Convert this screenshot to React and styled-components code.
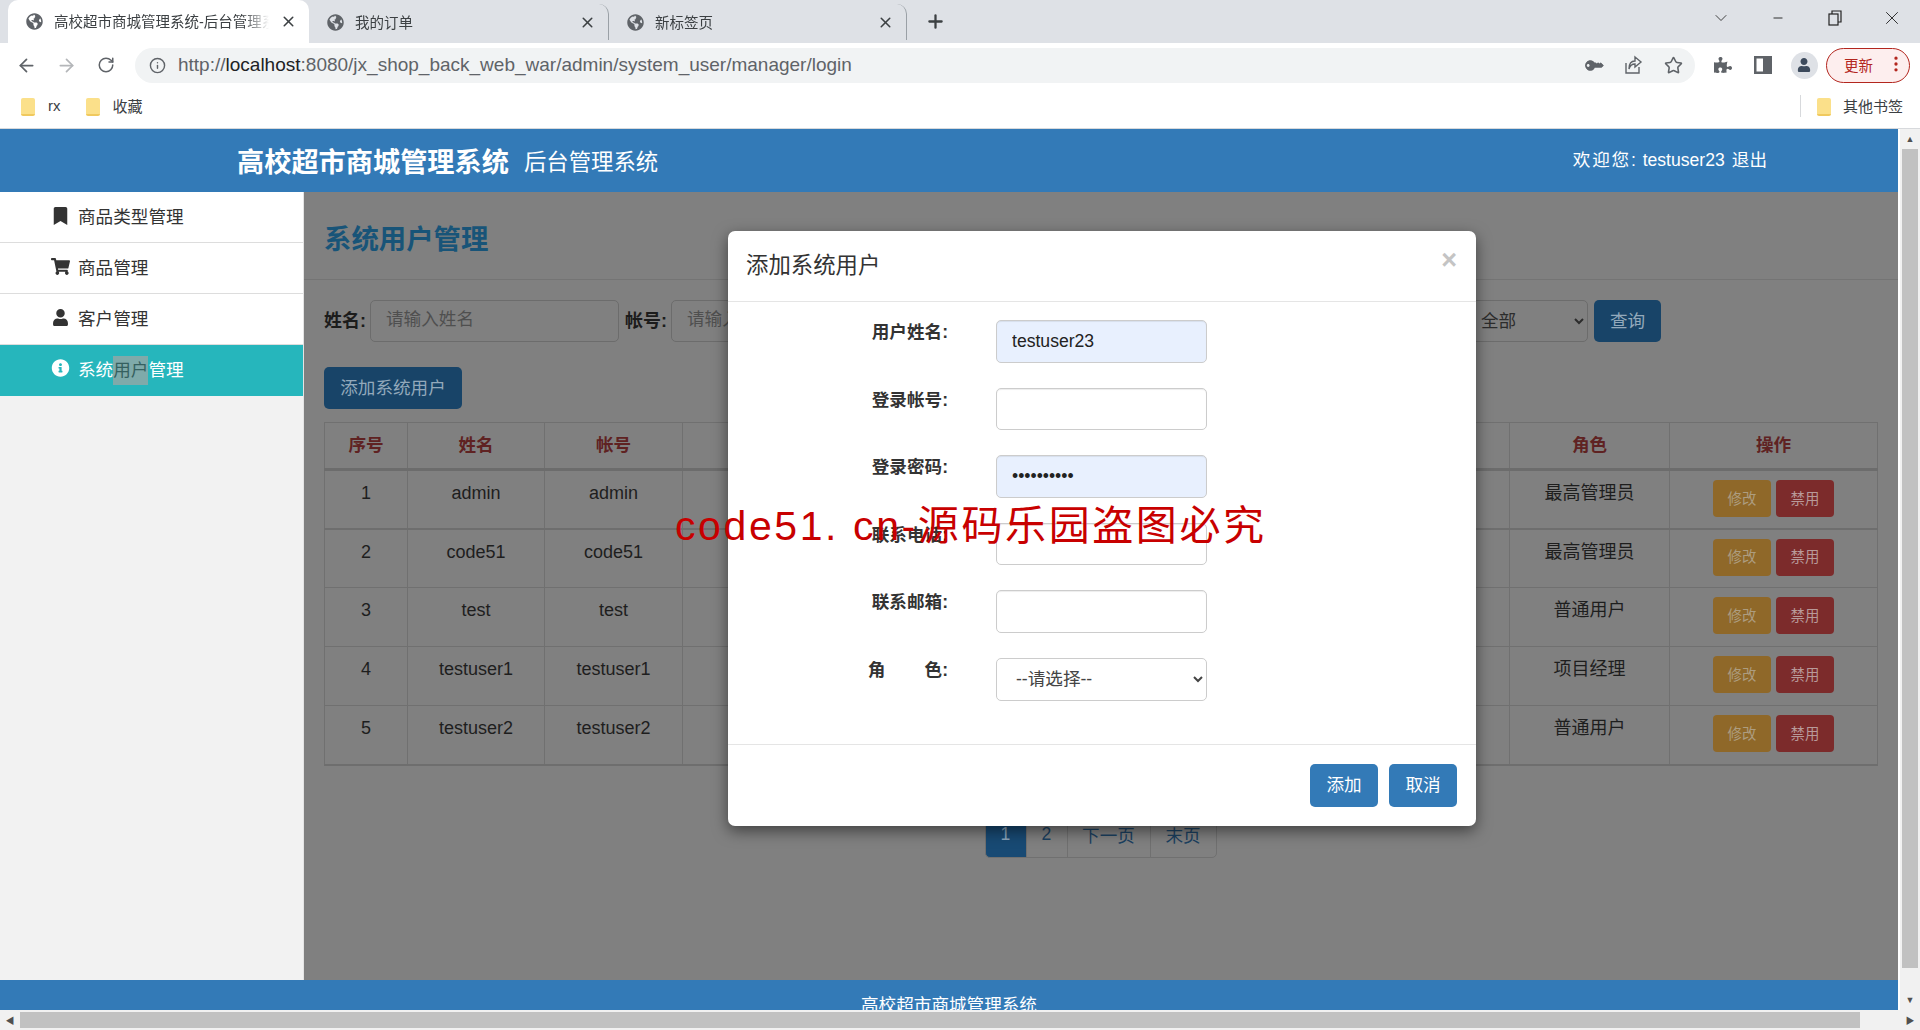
import styled, { createGlobalStyle } from "styled-components";
import { ArrowLeft, ArrowRight, RotateCw, Info, Star, X, Plus, Minus, ChevronDown, EllipsisVertical } from "lucide-react";
import { FaBookmark, FaShoppingCart, FaUser, FaInfoCircle, FaGlobeAmericas, FaPuzzlePiece, FaKey } from "react-icons/fa";

const FONT = `"Liberation Sans", "Noto Sans CJK SC", sans-serif`;

const GlobalStyle = createGlobalStyle`
  html, body {
    margin: 0;
    padding: 0;
    width: 1920px;
    height: 1030px;
    overflow: hidden;
    font-family: ${FONT};
    color: #333;
  }
  * { box-sizing: border-box; }
`;

const Viewport = styled.div`
  width: 1920px;
  height: 1030px;
  display: flex;
  flex-direction: column;
  position: relative;
  overflow: hidden;
  background: #fff;
`;

/* browser chrome */
const TabStrip = styled.div`
  height: 43px;
  flex: none;
  display: flex;
  align-items: flex-end;
  padding-left: 8px;
  background: #dee1e6;
`;

const Tab = styled.div`
  width: ${(p) => p.$width}px;
  height: ${(p) => (p.$active ? 43 : 36)}px;
  margin-bottom: ${(p) => (p.$active ? 0 : 3)}px;
  padding: 0 12px 0 18px;
  display: flex;
  align-items: center;
  gap: 11px;
  background: ${(p) => (p.$active ? "#fff" : "transparent")};
  border-radius: 10px 10px 0 0;
  border-right: ${(p) => (p.$divider ? "1px solid #9aa0a6" : "none")};
  color: #3c4043;
  font-size: 14.5px;
  svg.fav { color: #5f6368; flex: none; }
`;

const TabTitle = styled.span`
  flex: 1;
  padding-bottom: 2px;
  white-space: nowrap;
  overflow: hidden;
  mask-image: linear-gradient(to right, #000 88%, transparent 100%);
`;

const NewTab = styled.div`
  width: 56px;
  display: flex;
  justify-content: center;
  align-self: center;
  color: #3c4043;
`;

const WindowControls = styled.div`
  margin-left: auto;
  align-self: flex-start;
  display: flex;
  height: 36px;
`;

const WindowButton = styled.div`
  width: 57px;
  display: flex;
  align-items: center;
  justify-content: center;
  color: #222;
`;

const Toolbar = styled.div`
  height: 44px;
  flex: none;
  display: flex;
  align-items: center;
  padding-left: 6px;
  background: #fff;
`;

const NavButton = styled.div`
  width: 40px;
  height: 36px;
  flex: none;
  display: flex;
  align-items: center;
  justify-content: center;
  color: ${(p) => (p.$off ? "#b4b6b9" : "#5f6368")};
`;

const ExtensionGroup = styled.div`
  display: flex;
  margin-left: 8px;
`;

const AddressBar = styled.div`
  width: 1560px;
  height: 35px;
  margin-left: 9px;
  flex: none;
  display: flex;
  align-items: center;
  padding: 0 2px 0 14px;
  border-radius: 18px;
  background: #f1f3f4;
  color: #5f6368;
`;

const AddressText = styled.div`
  flex: 1;
  margin-left: 12px;
  font-size: 19px;
  white-space: nowrap;
  color: #5f6368;
  b { font-weight: 400; color: #202124; }
`;

const AddressIcon = styled.div`
  width: 40px;
  display: flex;
  justify-content: center;
  color: #5f6368;
`;

const KeyGlyph = styled(FaKey)`
  transform: rotate(-135deg);
`;

const Avatar = styled.div`
  width: 27px;
  height: 27px;
  margin-left: 2px;
  border-radius: 50%;
  background: #dee1e6;
  display: flex;
  align-items: center;
  justify-content: center;
  color: #3c4a5c;
`;

const UpdatePill = styled.div`
  width: 84px;
  height: 35px;
  margin-left: 3px;
  display: flex;
  align-items: center;
  justify-content: space-between;
  padding: 0 3px 2px 17px;
  border: 1px solid #b3261e;
  border-radius: 18px;
  background: #fdeeee;
  color: #b3261e;
  font-size: 14.5px;
`;

const BookmarkBar = styled.div`
  height: 42px;
  flex: none;
  display: flex;
  align-items: center;
  padding: 0 17px 4px 21px;
  border-bottom: 1px solid #d7d9dc;
  background: #fff;
  font-size: 15px;
  color: #3c4043;
`;

const Bookmark = styled.div`
  display: flex;
  align-items: center;
  gap: 13px;
  margin-right: ${(p) => p.$gap || 0}px;
`;

const Folder = styled.span`
  display: block;
  width: 14px;
  height: 18px;
  margin-top: 3px;
  border-radius: 2px;
  background: #fbe08a;
  border-bottom: 2px solid #f0c95e;
`;

const OtherBookmarks = styled.div`
  margin-left: auto;
  height: 22px;
  padding-left: 16px;
  border-left: 1px solid #d7d9dc;
  display: flex;
  align-items: center;
  gap: 12px;
`;

/* page */
const PageFrame = styled.div`
  height: 881px;
  flex: none;
  display: flex;
`;

const PageBody = styled.div`
  width: 1900px;
  padding-right: 2px;
  display: flex;
  flex-direction: column;
  overflow: hidden;
  background: #fff;
`;

const Banner = styled.header`
  height: 63px;
  flex: none;
  display: flex;
  align-items: center;
  padding: 0 131px 2px 237px;
  background: #337ab7;
  color: #fff;
`;

const BannerTitle = styled.h1`
  margin: 0;
  font-size: 27.2px;
  font-weight: 700;
`;

const BannerSub = styled.span`
  margin-left: 15px;
  font-size: 22.4px;
`;

const BannerUser = styled.div`
  margin-left: auto;
  margin-bottom: 3px;
  font-size: 17.6px;
  white-space: nowrap;
  span { margin-right: 5px; letter-spacing: 1.8px; }
  a { margin-left: 7px; }
`;

const Middle = styled.div`
  height: 788px;
  flex: none;
  display: flex;
`;

const Sidebar = styled.nav`
  width: 304px;
  flex: none;
  background: #f2f2f2;
  border-right: 1px solid #e4e4e4;
`;

const SideItem = styled.div`
  height: 51px;
  display: flex;
  align-items: center;
  gap: 8px;
  padding: 0 0 ${(p) => (p.$active ? 5 : 3)}px 51px;
  background: ${(p) => (p.$active ? "#26b6bc" : "#fff")};
  border-bottom: ${(p) => (p.$active ? "none" : "1px solid #ddd")};
  color: ${(p) => (p.$active ? "#fff" : "#333")};
  font-size: 17.6px;
  svg { width: 19px; flex: none; }
  mark { background: #7faaaa; color: #35605f; padding: 4px 0 5px; }
`;

const Main = styled.main`
  flex: 1;
  position: relative;
  overflow: hidden;
  background: #808080;
`;

const MainHead = styled.div`
  height: 88px;
  padding: 2px 20px 0;
  display: flex;
  align-items: center;
  border-bottom: 1px solid #747474;
`;

const MainTitle = styled.h2`
  margin: 0;
  font-size: 27.4px;
  font-weight: 700;
  color: #185478;
`;

const SearchRow = styled.div`
  width: 1357px;
  height: 42px;
  margin-top: 20px;
  padding-left: 20px;
  display: flex;
  align-items: center;
`;

const SearchLabel = styled.label`
  padding-bottom: 4px;
  font-size: 18px;
  font-weight: 700;
  color: #1c1c1c;
  margin: 0 4px 0 ${(p) => p.$gap || 0}px;
  white-space: nowrap;
`;

const SearchInput = styled.input`
  width: ${(p) => (p.$width ? `${p.$width}px` : "auto")};
  flex: ${(p) => (p.$width ? "none" : 1)};
  min-width: 0;
  height: 42px;
  padding: 0 15px 3px;
  border: 1px solid #6c6c6c;
  border-radius: 5px;
  background: #808080;
  font: 17.6px ${FONT};
  outline: none;
  &::placeholder { color: #4f4f4f; opacity: 1; }
`;

const SearchSelect = styled.select`
  width: 121px;
  height: 42px;
  margin-right: 6px;
  padding-left: 9px;
  border: 1px solid #6c6c6c;
  border-radius: 5px;
  background: #808080;
  color: #2c2c2c;
  font: 17.6px ${FONT};
`;

const DimButton = styled.button`
  width: ${(p) => p.$width}px;
  height: 42px;
  flex: none;
  padding: 0 0 4px;
  border: none;
  border-radius: 5px;
  background: #184468;
  color: #93a9bb;
  font: 17.6px ${FONT};
`;

const AddRow = styled.div`
  margin-top: 25px;
  padding-left: 20px;
`;

const GridTable = styled.table`
  width: 1554px;
  margin: 13px 0 0 20px;
  table-layout: fixed;
  border-collapse: collapse;
  font-size: 18px;
  color: #1e1e1e;
  text-align: center;
  th {
    height: 47px;
    padding-bottom: 5px;
    border: 1px solid #707070;
    border-bottom: 3px solid #6c6c6c;
    color: #5f2222;
    font-size: 17.6px;
    font-weight: 700;
  }
  td {
    height: 59px;
    padding: 9px 8px 7px;
    border: 1px solid #707070;
    vertical-align: top;
    line-height: 26px;
  }
  tbody tr:first-child td { border-bottom: 2px solid #6e6e6e; }
  tbody tr:last-child td { border-bottom: 2px solid #6e6e6e; }
`;

const ActionCell = styled.div`
  display: flex;
  justify-content: center;
  gap: 5px;
`;

const ActionButton = styled.button`
  width: 58px;
  height: 37px;
  padding: 0 0 3px;
  border: none;
  border-radius: 4px;
  background: ${(p) => (p.$danger ? "#7c2b2b" : "#8f6829")};
  color: ${(p) => (p.$danger ? "#b89a9a" : "#ad9d80")};
  font: 14.4px ${FONT};
`;

const Pager = styled.div`
  display: flex;
  justify-content: center;
  margin-top: 50px;
`;

const PageItem = styled.div`
  width: ${(p) => p.$width}px;
  height: 42px;
  display: flex;
  align-items: center;
  justify-content: center;
  margin-left: -1px;
  padding-bottom: 4px;
  border: 1px solid #707070;
  background: ${(p) => (p.$active ? "#184a74" : "#808080")};
  color: ${(p) => (p.$active ? "#8aa5bb" : "#1b4060")};
  font-size: 17.6px;
  &:first-child { border-radius: 5px 0 0 5px; }
  &:last-child { border-radius: 0 5px 5px 0; }
`;

/* dialog */
const Dialog = styled.div`
  position: absolute;
  top: 39px;
  left: 424px;
  width: 748px;
  height: 595px;
  display: flex;
  flex-direction: column;
  background: #fff;
  border-radius: 7px;
  box-shadow: 0 5px 15px rgba(0, 0, 0, 0.5);
`;

const DialogHead = styled.div`
  height: 71px;
  flex: none;
  display: flex;
  align-items: center;
  justify-content: space-between;
  padding: 0 18px;
  border-bottom: 1px solid #e5e5e5;
`;

const DialogTitle = styled.h4`
  margin: 0 0 6px;
  font-size: 22.4px;
  font-weight: 400;
  color: #333;
`;

const CloseMark = styled.span`
  margin: 0 1px 12px 0;
  font-size: 27px;
  font-weight: 700;
  line-height: 1;
  color: #c4c4c4;
`;

const DialogBody = styled.div`
  flex: 1;
  padding: 18px 0 0 144px;
  display: grid;
  grid-template-columns: 76px 211px;
  grid-auto-rows: 42.6px;
  column-gap: 48px;
  row-gap: 25px;
  align-content: start;
`;

const FieldLabel = styled.label`
  justify-self: end;
  margin-top: 1px;
  font-size: 17.6px;
  font-weight: 700;
  line-height: 22px;
  color: #333;
  white-space: pre;
`;

const FieldInput = styled.input`
  width: 100%;
  height: 100%;
  padding: 0 15px;
  border: 1px solid #ccc;
  border-radius: 5px;
  background: ${(p) => (p.$filled ? "#e8f0fe" : "#fff")};
  color: #222;
  font: 17.6px ${FONT};
  outline: none;
  box-shadow: inset 0 1px 1px rgba(0, 0, 0, 0.075);
`;

const FieldSelect = styled.select`
  width: 100%;
  height: 100%;
  padding-left: 15px;
  border: 1px solid #ccc;
  border-radius: 5px;
  background: #fff;
  color: #444;
  font: 17.6px ${FONT};
`;

const DialogFoot = styled.div`
  height: 82px;
  flex: none;
  display: flex;
  justify-content: flex-end;
  gap: 11px;
  padding: 19px 19px 0 0;
  border-top: 1px solid #e5e5e5;
`;

const PrimaryButton = styled.button`
  width: 68px;
  height: 43px;
  padding: 0 0 5px;
  border: none;
  border-radius: 5px;
  background: #337ab7;
  color: #fff;
  font: 17.6px ${FONT};
`;

const Footer = styled.footer`
  height: 30px;
  flex: none;
  padding-top: 13px;
  background: #337ab7;
  color: #fff;
  font-size: 17.6px;
  line-height: 24px;
  text-align: center;
  overflow: hidden;
  white-space: nowrap;
`;

const Watermark = styled.div`
  position: absolute;
  top: 498px;
  left: 675px;
  color: #c80000;
  font-size: 41px;
  letter-spacing: 2.6px;
  line-height: 56px;
  white-space: nowrap;
  pointer-events: none;
`;

/* window scrollbars */
const VScroll = styled.div`
  width: 20px;
  flex: none;
  display: flex;
  flex-direction: column;
  align-items: center;
  background: #f1f1f1;
`;

const ScrollArrow = styled.div`
  height: 20px;
  flex: none;
  display: flex;
  align-items: center;
  justify-content: center;
  width: 20px;
  color: #505050;
  font-size: 9px;
`;

const VThumb = styled.div`
  width: 16px;
  height: 819px;
  background: #c1c1c1;
`;

const VSpacer = styled.div`
  flex: 1;
`;

const HScroll = styled.div`
  height: 20px;
  flex: none;
  display: flex;
  align-items: center;
  background: #f1f1f1;
`;

const HThumb = styled.div`
  width: 1840px;
  height: 16px;
  background: #c1c1c1;
`;

const RestoreIcon = () => (
  <svg width="14" height="16" viewBox="0 0 14 16" fill="none" stroke="currentColor" strokeWidth="1.2">
    <rect x="1" y="4" width="9" height="11" />
    <path d="M4 4V1h9v11h-3" />
  </svg>
);

const ShareIcon = () => (
  <svg width="20" height="20" viewBox="0 0 20 20" fill="none" stroke="currentColor" strokeWidth="1.4">
    <path d="M3 8v10h13v-6" />
    <path d="M12 2l6 5-6 5V9c-3 0-5 1.500-6 5 0-5 2-8 6-8z" />
  </svg>
);

const SidePanelIcon = () => (
  <svg width="18" height="20" viewBox="0 0 18 20" fill="#5f6368">
    <path d="M0 1h18v18H0zM2.500 3.500v13H9v-13z" fillRule="evenodd" />
  </svg>
);

const users = [
  { name: "admin", role: "最高管理员" },
  { name: "code51", role: "最高管理员" },
  { name: "test", role: "普通用户" },
  { name: "testuser1", role: "项目经理" },
  { name: "testuser2", role: "普通用户" },
];

const Fav = () => <FaGlobeAmericas className="fav" size={17} />;

export default function App() {
  return (
    <Viewport>
      <GlobalStyle />
      <TabStrip>
        <Tab $width={301} $active>
          <Fav />
          <TabTitle>高校超市商城管理系统-后台管理系统</TabTitle>
          <X size={17} strokeWidth={2.2} />
        </Tab>
        <Tab $width={300} $divider>
          <Fav />
          <TabTitle>我的订单</TabTitle>
          <X size={17} strokeWidth={2.2} />
        </Tab>
        <Tab $width={298} $divider>
          <Fav />
          <TabTitle>新标签页</TabTitle>
          <X size={17} strokeWidth={2.2} />
        </Tab>
        <NewTab>
          <Plus size={21} strokeWidth={2.6} />
        </NewTab>
        <WindowControls>
          <WindowButton><ChevronDown size={20} strokeWidth={1} /></WindowButton>
          <WindowButton><Minus size={14} strokeWidth={1.6} /></WindowButton>
          <WindowButton><RestoreIcon /></WindowButton>
          <WindowButton><X size={22} strokeWidth={1} /></WindowButton>
        </WindowControls>
      </TabStrip>

      <Toolbar>
        <NavButton><ArrowLeft size={21} /></NavButton>
        <NavButton $off><ArrowRight size={21} /></NavButton>
        <NavButton><RotateCw size={18} /></NavButton>
        <AddressBar>
          <Info size={17} />
          <AddressText>http://<b>localhost</b>:8080/jx_shop_back_web_war/admin/system_user/manager/login</AddressText>
          <AddressIcon><KeyGlyph size={15} /></AddressIcon>
          <AddressIcon><ShareIcon /></AddressIcon>
          <AddressIcon><Star size={19} /></AddressIcon>
        </AddressBar>
        <ExtensionGroup>
          <NavButton><FaPuzzlePiece size={18} /></NavButton>
          <NavButton><SidePanelIcon /></NavButton>
          <NavButton><Avatar><FaUser size={14} /></Avatar></NavButton>
        </ExtensionGroup>
        <UpdatePill>
          更新
          <EllipsisVertical size={20} />
        </UpdatePill>
      </Toolbar>

      <BookmarkBar>
        <Bookmark $gap={25}><Folder />rx</Bookmark>
        <Bookmark><Folder />收藏</Bookmark>
        <OtherBookmarks><Folder />其他书签</OtherBookmarks>
      </BookmarkBar>

      <PageFrame>
        <PageBody>
          <Banner>
            <BannerTitle>高校超市商城管理系统</BannerTitle>
            <BannerSub>后台管理系统</BannerSub>
            <BannerUser><span>欢迎您:</span>testuser23<a>退出</a></BannerUser>
          </Banner>
          <Middle>
            <Sidebar>
              <SideItem><FaBookmark size={18} />商品类型管理</SideItem>
              <SideItem><FaShoppingCart size={17} />商品管理</SideItem>
              <SideItem><FaUser size={17} />客户管理</SideItem>
              <SideItem $active><FaInfoCircle size={18} /><span>系统<mark>用户</mark>管理</span></SideItem>
            </Sidebar>
            <Main>
              <MainHead>
                <MainTitle>系统用户管理</MainTitle>
              </MainHead>
              <SearchRow>
                <SearchLabel>姓名:</SearchLabel>
                <SearchInput $width={249} placeholder="请输入姓名" />
                <SearchLabel $gap={6}>帐号:</SearchLabel>
                <SearchInput $width={249} placeholder="请输入帐号" />
                <SearchLabel $gap={6}>电话:</SearchLabel>
                <SearchInput placeholder="请输入电话" />
                <SearchLabel $gap={6}>角色:</SearchLabel>
                <SearchSelect defaultValue="all">
                  <option value="all">全部</option>
                </SearchSelect>
                <DimButton $width={67}>查询</DimButton>
              </SearchRow>
              <AddRow>
                <DimButton $width={138}>添加系统用户</DimButton>
              </AddRow>
              <GridTable>
                <colgroup>
                  <col width="83" />
                  <col width="137" />
                  <col width="138" />
                  <col width="200" />
                  <col />
                  <col width="160" />
                  <col width="208" />
                </colgroup>
                <thead>
                  <tr>
                    <th>序号</th>
                    <th>姓名</th>
                    <th>帐号</th>
                    <th>联系电话</th>
                    <th>联系邮箱</th>
                    <th>角色</th>
                    <th>操作</th>
                  </tr>
                </thead>
                <tbody>
                  {users.map((user, index) => (
                    <tr key={user.name}>
                      <td>{index + 1}</td>
                      <td>{user.name}</td>
                      <td>{user.name}</td>
                      <td>13800000000</td>
                      <td>{user.name}@code51.cn</td>
                      <td>{user.role}</td>
                      <td>
                        <ActionCell>
                          <ActionButton>修改</ActionButton>
                          <ActionButton $danger>禁用</ActionButton>
                        </ActionCell>
                      </td>
                    </tr>
                  ))}
                </tbody>
              </GridTable>
              <Pager>
                <PageItem $width={42} $active>1</PageItem>
                <PageItem $width={42}>2</PageItem>
                <PageItem $width={84}>下一页</PageItem>
                <PageItem $width={67}>末页</PageItem>
              </Pager>

              <Dialog>
                <DialogHead>
                  <DialogTitle>添加系统用户</DialogTitle>
                  <CloseMark>×</CloseMark>
                </DialogHead>
                <DialogBody>
                  <FieldLabel>用户姓名:</FieldLabel>
                  <FieldInput $filled readOnly value="testuser23" />
                  <FieldLabel>登录帐号:</FieldLabel>
                  <FieldInput readOnly value="" />
                  <FieldLabel>登录密码:</FieldLabel>
                  <FieldInput $filled readOnly type="password" value="1234567890" />
                  <FieldLabel>联系电话:</FieldLabel>
                  <FieldInput readOnly value="" />
                  <FieldLabel>联系邮箱:</FieldLabel>
                  <FieldInput readOnly value="" />
                  <FieldLabel>角{"        "}色:</FieldLabel>
                  <FieldSelect defaultValue="">
                    <option value="">--请选择--</option>
                  </FieldSelect>
                </DialogBody>
                <DialogFoot>
                  <PrimaryButton>添加</PrimaryButton>
                  <PrimaryButton>取消</PrimaryButton>
                </DialogFoot>
              </Dialog>
            </Main>
          </Middle>
          <Footer>高校超市商城管理系统</Footer>
        </PageBody>
        <VScroll>
          <ScrollArrow>▲</ScrollArrow>
          <VThumb />
          <VSpacer />
          <ScrollArrow>▼</ScrollArrow>
        </VScroll>
      </PageFrame>

      <HScroll>
        <ScrollArrow>◀</ScrollArrow>
        <HThumb />
        <VSpacer />
        <ScrollArrow>▶</ScrollArrow>
      </HScroll>

      <Watermark>code51. cn-源码乐园盗图必究</Watermark>
    </Viewport>
  );
}
